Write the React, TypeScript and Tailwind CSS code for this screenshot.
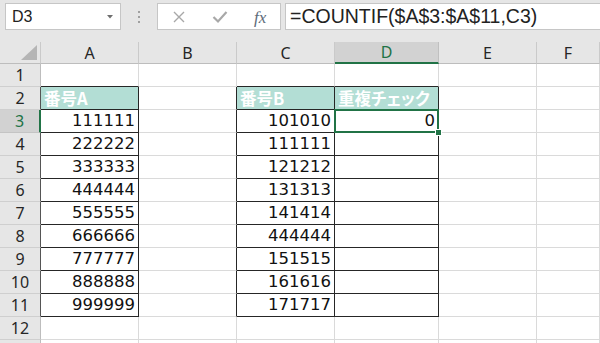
import React from 'react';

const COLS = ['A', 'B', 'C', 'D', 'E', 'F'];
const ROWS = [1, 2, 3, 4, 5, 6, 7, 8, 9, 10, 11, 12, 13];

const colA: Record<number, string> = {
  3: '111111', 4: '222222', 5: '333333', 6: '444444', 7: '555555',
  8: '666666', 9: '777777', 10: '888888', 11: '999999',
};
const colC: Record<number, string> = {
  3: '101010', 4: '111111', 5: '121212', 6: '131313', 7: '141414',
  8: '444444', 9: '151515', 10: '161616', 11: '171717',
};

// bordered ranges: A2:A11 and C2:D11 (col index 1 = A)
const inTable = (r: number, c: number) =>
  r >= 2 && r <= 11 && (c === 1 || c === 3 || c === 4);

const FormulaBar = () => (
  <div className="flex items-start pt-[3px] h-[42px] bg-[#e6e6e6]">
    <div className="ml-[5px] w-[116px] h-[27px] bg-white border border-[#c6c6c6] flex items-center justify-between pl-[6px] pr-[7px]">
      <span className="font-['Liberation_Sans',sans-serif] text-[16px] text-[#222]">D3</span>
      <svg width="6" height="4" viewBox="0 0 6 4">
        <path d="M0 0 L6 0 L3 3.5 Z" fill="#6e6e6e" />
      </svg>
    </div>
    <div className="w-[36px] h-[27px] flex flex-col items-center justify-center gap-[3px]">
      <span className="w-[2px] h-[2px] bg-[#a0a0a0]" />
      <span className="w-[2px] h-[2px] bg-[#a0a0a0]" />
      <span className="w-[2px] h-[2px] bg-[#a0a0a0]" />
    </div>
    <div className="w-[124px] h-[27px] bg-white border border-[#c6c6c6] relative">
      <svg className="absolute left-[14px] top-[6px]" width="14" height="14" viewBox="0 0 14 14">
        <path d="M2 2 L12 12 M12 2 L2 12" stroke="#a8a8a8" strokeWidth="1.4" fill="none" />
      </svg>
      <svg className="absolute left-[54px] top-[6px]" width="16" height="14" viewBox="0 0 16 14">
        <path d="M1.5 7 L6 11.5 L14.5 2" stroke="#a8a8a8" strokeWidth="2.2" fill="none" />
      </svg>
      <span className="absolute left-[96px] top-[1px] font-['Liberation_Serif',serif] italic text-[17px] text-[#5d6b7a]">
        fx
      </span>
    </div>
    <div className="ml-[4px] flex-1 h-[27px] bg-white border border-[#c6c6c6] border-r-0 flex items-center pl-[4px]">
      <span className="font-['Liberation_Sans',sans-serif] text-[19.5px] text-[#222] leading-none">
        =COUNTIF($A$3:$A$11,C3)
      </span>
    </div>
  </div>
);

const Corner = () => (
  <div className="h-[22px] bg-[#e6e6e6] border-r border-b border-r-[#cacaca] border-b-[#bdbdbd] relative">
    <svg className="absolute right-[3px] bottom-[3px]" width="16" height="15" viewBox="0 0 16 15">
      <path d="M16 0 L16 15 L0 15 Z" fill="#b5b5b5" />
    </svg>
  </div>
);

const ColHeader = ({ label }: { label: string }) =>
  label === 'D' ? (
    <div className="h-[22px] bg-[#d2d2d2] border-r border-r-[#c0c0c0] border-b-2 border-b-[#217346] flex items-center justify-center font-['Noto_Sans',sans-serif] text-[16px] text-[#217346]">
      {label}
    </div>
  ) : (
    <div className="h-[22px] bg-[#e6e6e6] border-r border-b border-r-[#cacaca] border-b-[#bdbdbd] flex items-center justify-center font-['Noto_Sans',sans-serif] text-[16px] text-[#262626]">
      {label}
    </div>
  );

const RowHeader = ({ r }: { r: number }) =>
  r === 3 ? (
    <div className="h-[23px] bg-[#d2d2d2] border-r-2 border-b border-r-[#217346] border-b-[#c4c4c4] flex items-center justify-center font-['Noto_Sans',sans-serif] text-[16px] text-[#217346]">
      {r}
    </div>
  ) : (
    <div
      className={`h-[23px] bg-[#e6e6e6] border-r border-b border-b-[#cfcfcf] flex items-center justify-center font-['Noto_Sans',sans-serif] text-[16px] text-[#262626] ${
        inTable(r, 1) ? 'border-r-[#555555]' : 'border-r-[#bdbdbd]'
      }`}
    >
      {r <= 12 ? r : ''}
    </div>
  );

const Cell = ({ r, c }: { r: number; c: number }) => {
  const rightDark = inTable(r, c) || inTable(r, c + 1);
  const bottomDark = inTable(r, c) || inTable(r + 1, c);
  const isHead = r === 2 && inTable(r, c);
  let text = '';
  if (c === 1 && colA[r]) text = colA[r];
  if (c === 3 && colC[r]) text = colC[r];
  if (r === 3 && c === 4) text = '0';
  if (isHead && c === 1) text = '番号A';
  if (isHead && c === 3) text = '番号B';
  if (isHead && c === 4) text = '重複チェック';

  return (
    <div
      className={`h-[23px] border-r border-b relative flex items-center ${
        rightDark ? 'border-r-[#262626]' : 'border-r-[#dadada]'
      } ${bottomDark ? 'border-b-[#262626]' : 'border-b-[#dadada]'} ${
        isHead
          ? "bg-[#b3ded5] text-white font-bold pl-[3px] font-['Noto_Sans_CJK_JP',sans-serif] text-[16.5px] leading-[20px] [font-feature-settings:'palt'] whitespace-nowrap"
          : "bg-white justify-end pr-[3px] font-['DejaVu_Sans',sans-serif] text-[16.5px] text-[#111]"
      }`}
    >
      {text}
      {r === 3 && c === 4 && (
        <div className="absolute -left-[1px] -top-[1px] -right-[1px] -bottom-[1px] border-2 border-[#217346] z-10">
          <div className="absolute -right-[5px] -bottom-[5px] w-[7px] h-[7px] bg-[#217346] border border-white" />
        </div>
      )}
    </div>
  );
};

export default function App() {
  return (
    <div className="w-[600px] h-[343px] overflow-hidden bg-white">
      <FormulaBar />
      <div className="grid grid-cols-[41px_98px_98px_98px_104px_98px_1fr]">
        <Corner />
        {COLS.map((l) => (
          <ColHeader key={l} label={l} />
        ))}
        {ROWS.map((r) => (
          <React.Fragment key={r}>
            <RowHeader r={r} />
            {COLS.map((_, i) => (
              <Cell key={i} r={r} c={i + 1} />
            ))}
          </React.Fragment>
        ))}
      </div>
    </div>
  );
}
